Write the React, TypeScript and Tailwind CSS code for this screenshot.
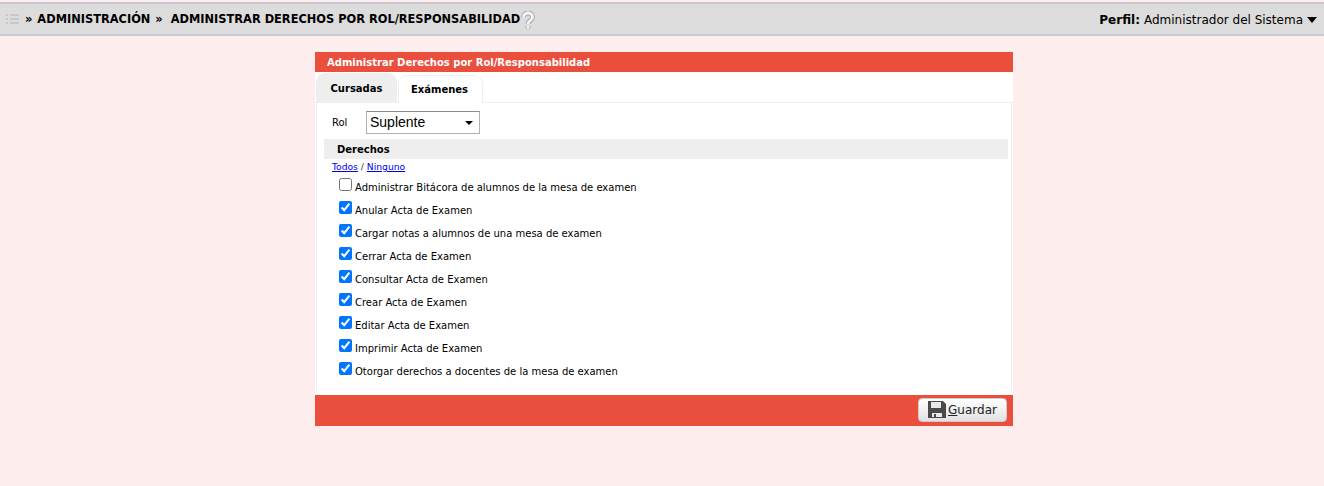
const permissions = [
  { label: 'Administrar Bitácora de alumnos de la mesa de examen', checked: false },
  { label: 'Anular Acta de Examen', checked: true },
  { label: 'Cargar notas a alumnos de una mesa de examen', checked: true },
  { label: 'Cerrar Acta de Examen', checked: true },
  { label: 'Consultar Acta de Examen', checked: true },
  { label: 'Crear Acta de Examen', checked: true },
  { label: 'Editar Acta de Examen', checked: true },
  { label: 'Imprimir Acta de Examen', checked: true },
  { label: 'Otorgar derechos a docentes de la mesa de examen', checked: true },
];

const App = () => {
  return (
    <div className="min-h-[486px] bg-[#fdeded] pt-[2px] font-['DejaVu_Sans',sans-serif] text-black">
      {/* Top bar */}
      <div className="flex h-[34px] items-center justify-between border-y-2 border-[#c9c9d6] bg-[#dcdcdc] pt-[2px] pr-[7px] pl-[6px]">
        <div className="flex items-center">
          <svg width="13" height="10" viewBox="0 0 13 10" className="mr-[6px] -mt-[2px]">
            <path d="M0 1h2M4 1h9M0 5h2M4 5h9M0 9h2M4 9h9" stroke="#c8c8c8" strokeWidth="2" />
          </svg>
          <span className="text-[11.4px] font-bold">»</span>
          <span className="ml-[5px] text-[11.4px] font-bold whitespace-nowrap">ADMINISTRACIÓN</span>
          <span className="ml-[5px] text-[11.4px] font-bold">»</span>
          <span className="ml-[8px] text-[11.4px] font-bold whitespace-nowrap">ADMINISTRAR DERECHOS POR ROL/RESPONSABILIDAD</span>
          <svg width="14" height="19" viewBox="0 0 14 19" className="ml-[1px]">
            <path d="M2.5 6C2.5 3.5 4.5 2 7 2s4.5 1.5 4.5 4c0 3.5-4.5 3.5-4.5 7M7 15v2.5" fill="none" stroke="#a8a8a8" strokeWidth="4.8" />
            <path d="M2.5 6C2.5 3.5 4.5 2 7 2s4.5 1.5 4.5 4c0 3.5-4.5 3.5-4.5 7M7 15v2.5" fill="none" stroke="#f6f6f6" strokeWidth="2.8" />
          </svg>
        </div>
        <div className="flex items-center text-[12px]">
          <span className="font-bold">Perfil:</span>
          <span className="ml-[4px]">Administrador del Sistema</span>
          <span className="ml-[4px] h-0 w-0 border-x-[5px] border-t-[6px] border-x-transparent border-t-black" />
        </div>
      </div>

      {/* Card */}
      <div className="mt-[16px] ml-[315px] w-[698px] bg-white">
        <div className="flex h-[20px] items-center bg-[#ea4e3d] pl-[12px] text-[10px] font-bold text-white">
          Administrar Derechos por Rol/Responsabilidad
        </div>

        {/* Tabs */}
        <div className="flex h-[31px] items-end gap-[1px] border-b border-[#eeeeee] bg-white pl-[1px]">
          <div className="flex h-[29px] w-[81px] items-center justify-center rounded-t-[9px] bg-[#eeeeee] pt-[2px] text-[10px] font-bold">
            Cursadas
          </div>
          <div className="-mb-px flex h-[28px] w-[85px] items-center justify-center rounded-t-[9px] border border-b-0 border-[#eeeeee] bg-white pr-[2px] text-[10px] font-bold">
            Exámenes
          </div>
        </div>

        {/* Content */}
        <div className="mx-[1px] border-x border-[#eeeeee] pr-[3px] pb-[13px] pl-[7px]">
          <div className="flex h-[36px] items-center pl-[8px]">
            <span className="mt-[2px] w-[34px] text-[10px]">Rol</span>
            <div className="relative mt-[2px]">
              <select
                defaultValue="Suplente"
                className="block h-[23px] w-[114px] appearance-none border border-[#b0b0b0] border-t-[#8c8c8c] bg-white pl-[3px] font-['Liberation_Sans',sans-serif] text-[14px]"
              >
                <option>Suplente</option>
                <option>Titular</option>
              </select>
              <span className="pointer-events-none absolute top-[10px] right-[7px] h-0 w-0 border-x-[4px] border-t-[4px] border-x-transparent border-t-black" />
            </div>
          </div>

          <div className="flex h-[20px] items-center bg-[#eeeeee] pt-[1px] pl-[13px] text-[10px] font-bold">Derechos</div>

          <div className="h-[16px] pl-[8px] text-[9.2px] leading-[16px] text-[#333333]">
            <a href="#" className="text-[#0000ee] underline">Todos</a>
            {' / '}
            <a href="#" className="text-[#0000ee] underline">Ninguno</a>
          </div>

          <div className="flex flex-col pl-[15px]">
            {permissions.map((permission) => (
              <label key={permission.label} className="flex h-[23px] items-center text-[10px]">
                <input type="checkbox" defaultChecked={permission.checked} className="mr-[3px] mb-[4px] h-[13px] w-[13px]" />
                <span className="mt-[2px]">{permission.label}</span>
              </label>
            ))}
          </div>
        </div>

        {/* Footer */}
        <div className="flex h-[31px] items-center justify-end bg-[#ea4e3d] pr-[6px] pb-[2px]">
          <button className="flex h-[24px] w-[89px] items-center justify-center rounded-[4px] border border-[#cccccc] bg-gradient-to-b from-white to-[#e2e2e2] text-[12px] text-[#222222]">
            <svg width="18" height="17" viewBox="0 0 18 17" className="mr-[2px]">
              <path fill="#4a4a4a" d="M0 0h15l3 3v14H0z" />
              <path fill="#e8e8e8" d="M3 1h10v6H3zM4 12h10v4H4z" />
              <path fill="#4a4a4a" d="M6 13h2v3H6z" />
            </svg>
            <span><u>G</u>uardar</span>
          </button>
        </div>
      </div>
    </div>
  );
};

export default App;
